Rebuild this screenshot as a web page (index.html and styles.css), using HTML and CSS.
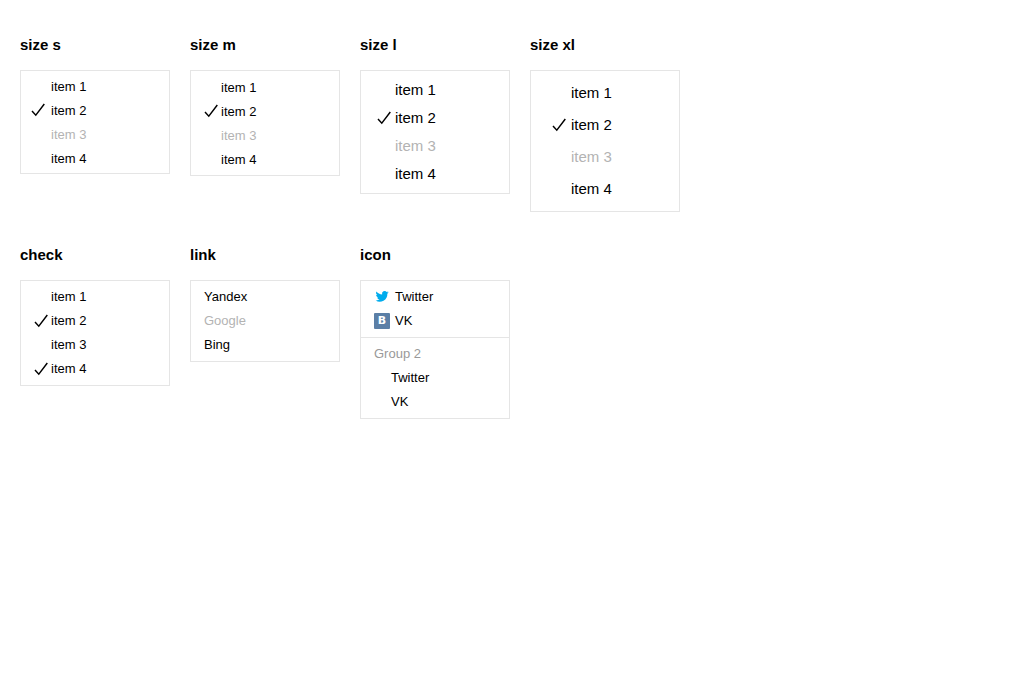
FILE: index.html
```html
<!DOCTYPE html>
<html lang="en">
<head>
<meta charset="utf-8">
<title>Menu</title>
<link rel="stylesheet" href="styles.css">
</head>
<body>
<svg class="sprite" aria-hidden="true">
  <symbol id="tick" viewBox="0 0 14 14"><path d="M1 7.900 4.800 12.200 13.300 1" fill="none" stroke="#000" stroke-width="1.450"/></symbol>
</svg>
<main>
  <div class="examples">
    <section class="example">
      <h2 class="example-title">size s</h2>
      <div class="menu menu-s" role="menu" aria-label="size s">
        <button class="item" role="menuitemradio" aria-checked="false"><span class="mark"></span>item 1</button>
        <button class="item" role="menuitemradio" aria-checked="true"><span class="mark"><svg class="tick"><use href="#tick"/></svg></span>item 2</button>
        <button class="item" role="menuitemradio" aria-checked="false" disabled><span class="mark"></span>item 3</button>
        <button class="item" role="menuitemradio" aria-checked="false"><span class="mark"></span>item 4</button>
      </div>
    </section>
    <section class="example">
      <h2 class="example-title">size m</h2>
      <div class="menu menu-m" role="menu" aria-label="size m">
        <button class="item" role="menuitemradio" aria-checked="false"><span class="mark"></span>item 1</button>
        <button class="item" role="menuitemradio" aria-checked="true"><span class="mark"><svg class="tick"><use href="#tick"/></svg></span>item 2</button>
        <button class="item" role="menuitemradio" aria-checked="false" disabled><span class="mark"></span>item 3</button>
        <button class="item" role="menuitemradio" aria-checked="false"><span class="mark"></span>item 4</button>
      </div>
    </section>
    <section class="example">
      <h2 class="example-title">size l</h2>
      <div class="menu menu-l" role="menu" aria-label="size l">
        <button class="item" role="menuitemradio" aria-checked="false"><span class="mark"></span>item 1</button>
        <button class="item" role="menuitemradio" aria-checked="true"><span class="mark"><svg class="tick"><use href="#tick"/></svg></span>item 2</button>
        <button class="item" role="menuitemradio" aria-checked="false" disabled><span class="mark"></span>item 3</button>
        <button class="item" role="menuitemradio" aria-checked="false"><span class="mark"></span>item 4</button>
      </div>
    </section>
    <section class="example">
      <h2 class="example-title">size xl</h2>
      <div class="menu menu-xl" role="menu" aria-label="size xl">
        <button class="item" role="menuitemradio" aria-checked="false"><span class="mark"></span>item 1</button>
        <button class="item" role="menuitemradio" aria-checked="true"><span class="mark"><svg class="tick"><use href="#tick"/></svg></span>item 2</button>
        <button class="item" role="menuitemradio" aria-checked="false" disabled><span class="mark"></span>item 3</button>
        <button class="item" role="menuitemradio" aria-checked="false"><span class="mark"></span>item 4</button>
      </div>
    </section>
  </div>
  <div class="examples">
    <section class="example">
      <h2 class="example-title">check</h2>
      <div class="menu menu-grouped" role="menu" aria-label="check">
        <div class="group">
          <button class="item" role="menuitemcheckbox" aria-checked="false"><span class="mark"></span>item 1</button>
          <button class="item" role="menuitemcheckbox" aria-checked="true"><span class="mark"><svg class="tick"><use href="#tick"/></svg></span>item 2</button>
          <button class="item" role="menuitemcheckbox" aria-checked="false"><span class="mark"></span>item 3</button>
          <button class="item" role="menuitemcheckbox" aria-checked="true"><span class="mark"><svg class="tick"><use href="#tick"/></svg></span>item 4</button>
        </div>
      </div>
    </section>
    <section class="example">
      <h2 class="example-title">link</h2>
      <nav class="menu menu-grouped" aria-label="link">
        <div class="group">
          <a class="item item-plain" href="#yandex">Yandex</a>
          <a class="item item-plain item-disabled" aria-disabled="true">Google</a>
          <a class="item item-plain" href="#bing">Bing</a>
        </div>
      </nav>
    </section>
    <section class="example">
      <h2 class="example-title">icon</h2>
      <div class="menu menu-grouped" role="menu" aria-label="icon">
        <div class="group" role="group">
          <button class="item item-plain" role="menuitem"><svg class="icon" viewBox="0 0 24 24" aria-hidden="true"><path fill="#00aced" transform="translate(2.4 1.200) scale(.82)" d="M24 4.600c-.9.4-1.800.7-2.800.8 1-.6 1.800-1.600 2.200-2.700-1 .6-2 1-3.100 1.200A4.900 4.900 0 0 0 11.900 8.400C7.700 8.200 4.100 6.300 1.700 3.100a4.900 4.900 0 0 0 1.500 6.600c-.8 0-1.600-.2-2.200-.6v.1c0 2.400 1.700 4.400 3.900 4.800-.7.2-1.500.2-2.200.1a4.900 4.900 0 0 0 4.600 3.400A9.900 9.900 0 0 1 0 19.500 14 14 0 0 0 21.500 7.100c1-.7 1.800-1.600 2.500-2.500z"/></svg>Twitter</button>
          <button class="item item-plain" role="menuitem"><span class="icon icon-vk" aria-hidden="true">B</span>VK</button>
        </div>
        <div class="group" role="group" aria-labelledby="group-2">
          <div class="group-title" id="group-2">Group 2</div>
          <button class="item" role="menuitem"><span class="mark"></span>Twitter</button>
          <button class="item" role="menuitem"><span class="mark"></span>VK</button>
        </div>
      </div>
    </section>
  </div>
</main>
</body>
</html>
```
FILE: styles.css
```css
* {
  box-sizing: border-box;
}

body {
  margin: 0;
  padding: 35px 20px;
  background: #fff;
  color: #000;
  font-family: "Liberation Sans", Arial, sans-serif;
  font-size: 13px;
}

.sprite {
  display: none;
}

.examples {
  display: flex;
  flex-wrap: wrap;
  align-items: flex-start;
  gap: 20px;
}

.examples + .examples {
  margin-top: 33px;
}

.example {
  flex: 0 0 150px;
}

.example-title {
  margin: 0 0 15px;
  font-size: 15px;
  line-height: 20px;
}

.menu {
  --row: 24px;
  --indent: 30px;
  --tick-gap: 3px;
  --icon-drop: 0;
  border: 1px solid #e5e5e5;
}

.menu-s {
  --tick-gap: 6px;
  padding: 3px 0;
}

.menu-m {
  padding: 4px 0;
}

.menu-l {
  --row: 28px;
  --indent: 34px;
  --tick-gap: 4px;
  --icon-drop: 2px;
  padding: 4px 0 6px;
  font-size: 15px;
}

.menu-xl {
  --row: 32px;
  --indent: 40px;
  --tick-gap: 5px;
  --icon-drop: 2px;
  padding: 5px 0 7px;
  font-size: 15px;
}

.menu-grouped {
  --icon-drop: 2px;
}

.group {
  padding: 3px 0 5px;
}

.group + .group {
  border-top: 1px solid #e5e5e5;
}

.item {
  display: flex;
  align-items: center;
  width: 100%;
  height: var(--row);
  margin: 0;
  padding: 0;
  border: 0;
  background: none;
  color: #000;
  font: inherit;
  text-align: left;
  text-decoration: none;
  cursor: pointer;
}

.item-plain {
  padding-left: 13px;
}

.item:disabled,
.item-disabled {
  color: #b3b3b3;
  cursor: default;
}

.mark {
  display: flex;
  flex: none;
  justify-content: flex-end;
  width: var(--indent);
  padding: var(--icon-drop) var(--tick-gap) 0 0;
}

.tick {
  width: 14px;
  height: 14px;
}

.icon {
  flex: none;
  width: 16px;
  height: 16px;
  margin: var(--icon-drop) 5px 0 0;
}

.icon-vk {
  border-radius: 1px;
  background: #5b7fa6;
  color: #fff;
  font: bold 11px/16px "DejaVu Sans", sans-serif;
  text-align: center;
}

.group-title {
  display: flex;
  align-items: center;
  height: var(--row);
  padding-left: 13px;
  color: #999;
}
```
